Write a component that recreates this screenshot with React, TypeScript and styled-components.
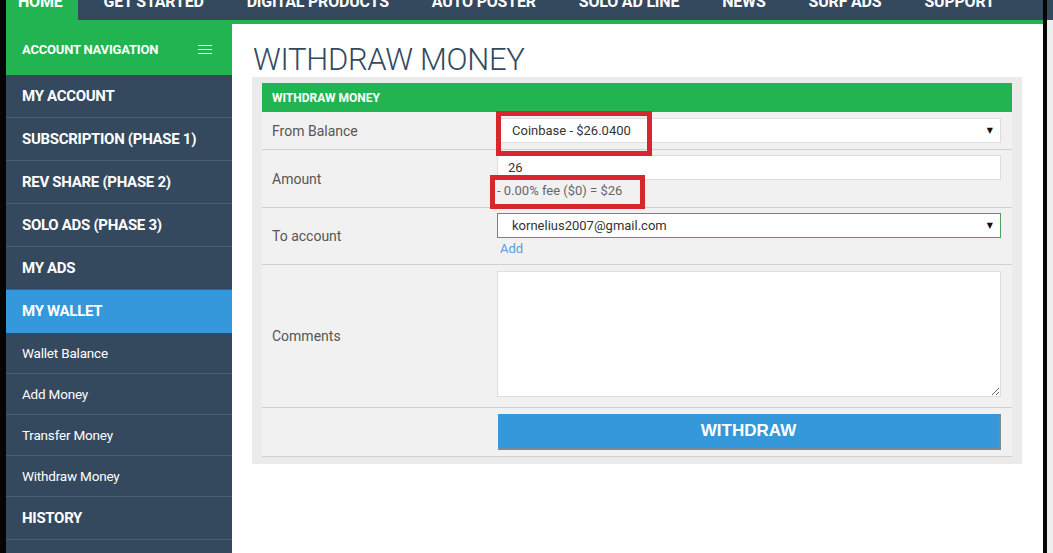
import React from "react";
import styled, { createGlobalStyle } from "styled-components";

const GlobalStyle = createGlobalStyle`
  html, body { margin: 0; padding: 0; }
  body {
    width: 1053px;
    height: 553px;
    overflow: hidden;
    font-family: Roboto, "Noto Sans", Arial, sans-serif;
    background: #ffffff;
  }
  * { box-sizing: border-box; }
`;

const NAVY = "#34495e";
const GREEN = "#21b451";
const BLUE = "#3498db";

const Frame = styled.div`
  display: flex;
  width: 1053px;
  height: 553px;
  overflow: hidden;
`;

const Edge = styled.div<{ $w: number }>`
  width: ${(p) => p.$w}px;
  flex: none;
  background: #050505;
`;

const Gutter = styled.div`
  width: 6px;
  flex: none;
  background: linear-gradient(to bottom, ${NAVY} 0, ${NAVY} 20px, #eceeef 20px);
`;

const Center = styled.div`
  width: 1037px;
  flex: none;
  display: flex;
  flex-direction: column;
  min-height: 0;
`;

const TopNav = styled.nav`
  flex: none;
  display: flex;
  height: 20px;
  background: ${NAVY};
  overflow: hidden;
  gap: 9px;
`;

const TopItem = styled.a<{ $active?: boolean }>`
  display: flex;
  align-items: flex-end;
  padding: ${(p) => (p.$active ? "0 15px 10px 12px" : "0 17px 10px")};
  background: ${(p) => (p.$active ? GREEN : "transparent")};
  color: #fff;
  font-weight: 700;
  font-size: 16px;
  line-height: 16px;
  letter-spacing: -0.2px;
  text-transform: uppercase;
  white-space: nowrap;
`;

const GreenLine = styled.div`
  flex: none;
  height: 4px;
  background: ${GREEN};
`;

const Body = styled.div`
  flex: 1;
  min-height: 0;
  overflow: hidden;
  display: flex;
`;

const Sidebar = styled.aside`
  width: 226px;
  flex: none;
  background: ${NAVY};
  display: flex;
  flex-direction: column;
`;

const SideHeader = styled.div`
  flex: none;
  height: 51px;
  background: ${GREEN};
  display: flex;
  align-items: center;
  justify-content: space-between;
  padding: 0 20px 0 16px;
  color: #fff;
  font-weight: 700;
  font-size: 13px;
  letter-spacing: -0.2px;
  text-transform: uppercase;
`;

const Burger = styled.span`
  display: flex;
  flex-direction: column;
  gap: 3px;
  width: 14px;
  & > i {
    display: block;
    height: 1px;
    background: #eaf7ee;
  }
`;

const SideItem = styled.a<{ $kind: "main" | "sub" | "active" }>`
  flex: none;
  display: flex;
  align-items: center;
  height: ${(p) => (p.$kind === "sub" ? 41 : 43)}px;
  padding-left: 16px;
  border-bottom: 1px solid ${(p) => (p.$kind === "active" ? BLUE : "#4b5e72")};
  background: ${(p) => (p.$kind === "active" ? BLUE : NAVY)};
  color: #fff;
  font-weight: ${(p) => (p.$kind === "sub" ? 400 : 700)};
  font-size: ${(p) => (p.$kind === "sub" ? "13.5px" : "15px")};
  letter-spacing: ${(p) => (p.$kind === "sub" ? "-0.2px" : "-0.3px")};
  text-transform: ${(p) => (p.$kind === "sub" ? "none" : "uppercase")};
  white-space: nowrap;
`;

const Main = styled.main`
  width: 811px;
  flex: none;
  background: #fff;
  padding: 19px 21px 0 20px;
`;

const Title = styled.h1`
  margin: 0 0 0 1px;
  font-weight: 300;
  font-size: 31px;
  line-height: 34px;
  color: ${NAVY};
  letter-spacing: -0.3px;
`;

const Panel = styled.section`
  position: relative;
  background: #ebebeb;
  padding: 6px 10px 7px;
`;

const PanelHeader = styled.div`
  height: 29px;
  background: ${GREEN};
  color: #fff;
  font-weight: 700;
  font-size: 12px;
  display: flex;
  align-items: center;
  padding-left: 10px;
  text-transform: uppercase;
`;

const Row = styled.div<{ $pt: number; $pb: number }>`
  display: grid;
  grid-template-columns: 235px 1fr;
  background: #f1f1f1;
  border-bottom: 1px solid #d0d0d0;
  & > div:last-child {
    padding: ${(p) => p.$pt}px 11px ${(p) => p.$pb}px 0;
  }
`;

const Label = styled.div`
  display: flex;
  align-items: center;
  padding-left: 10px;
  color: #555;
  font-size: 14px;
`;

const Control = styled.div`
  display: flex;
  flex-direction: column;
`;

const SelectBox = styled.div<{ $focus?: boolean }>`
  height: 25px;
  display: flex;
  align-items: center;
  justify-content: space-between;
  padding: 0 7px 0 14px;
  background: #fff;
  border: 1px solid ${(p) => (p.$focus ? "#4aa35a" : "#dedede")};
  color: #333;
  font-size: 13px;
`;

const Arrow = styled.span`
  font-size: 8px;
  color: #111;
  font-family: "DejaVu Sans", sans-serif;
`;

const TextInput = styled.input`
  height: 25px;
  border: 1px solid #dedede;
  background: #fff;
  padding: 0 10px;
  font-family: Roboto, sans-serif;
  font-size: 13px;
  color: #333;
  outline: none;
`;

const Note = styled.div`
  line-height: 22px;
  font-size: 13px;
  color: #666;
`;

const AddLink = styled.a`
  line-height: 22px;
  font-size: 13px;
  color: #5a9bd8;
  padding-left: 3px;
`;

const TextArea = styled.textarea`
  display: block;
  width: 100%;
  height: 126px;
  border: 1px solid #dedede;
  background: #fff;
  resize: vertical;
  outline: none;
`;

const Button = styled.button`
  height: 36px;
  margin-left: 1px;
  border: none;
  border-right: 2px solid #7d8a96;
  border-bottom: 2px solid #7d8a96;
  background: ${BLUE};
  color: #fff;
  font-family: "Liberation Sans", Arial, sans-serif;
  font-weight: 700;
  font-size: 17px;
`;

const Mark = styled.div`
  position: absolute;
  border: 5px solid #d8262e;
  pointer-events: none;
`;

const topLinks = [
  "Home",
  "Get Started",
  "Digital Products",
  "Auto Poster",
  "Solo Ad Line",
  "News",
  "Surf Ads",
  "Support",
];

const sideLinks: { label: string; kind: "main" | "sub" | "active" }[] = [
  { label: "My Account", kind: "main" },
  { label: "Subscription (Phase 1)", kind: "main" },
  { label: "Rev Share (Phase 2)", kind: "main" },
  { label: "Solo Ads (Phase 3)", kind: "main" },
  { label: "My Ads", kind: "main" },
  { label: "My Wallet", kind: "active" },
  { label: "Wallet Balance", kind: "sub" },
  { label: "Add Money", kind: "sub" },
  { label: "Transfer Money", kind: "sub" },
  { label: "Withdraw Money", kind: "sub" },
  { label: "History", kind: "main" },
  { label: "Settings", kind: "main" },
];

export default function App() {
  return (
    <>
      <GlobalStyle />
      <Frame>
        <Edge $w={6} />
        <Center>
          <TopNav>
            {topLinks.map((t, i) => (
              <TopItem key={t} $active={i === 0}>
                {t}
              </TopItem>
            ))}
          </TopNav>
          <GreenLine />
          <Body>
            <Sidebar>
              <SideHeader>
                <span>Account Navigation</span>
                <Burger>
                  <i />
                  <i />
                  <i />
                </Burger>
              </SideHeader>
              {sideLinks.map((s) => (
                <SideItem key={s.label} $kind={s.kind}>
                  {s.label}
                </SideItem>
              ))}
            </Sidebar>
            <Main>
              <Title>WITHDRAW MONEY</Title>
              <Panel>
                <PanelHeader>Withdraw Money</PanelHeader>
                <Row $pt={6} $pb={6}>
                  <Label>From Balance</Label>
                  <Control>
                    <SelectBox>
                      <span>Coinbase - $26.0400</span>
                      <Arrow>▼</Arrow>
                    </SelectBox>
                  </Control>
                </Row>
                <Row $pt={5} $pb={5}>
                  <Label>Amount</Label>
                  <Control>
                    <TextInput value="26" readOnly />
                    <Note>- 0.00% fee ($0) = $26</Note>
                  </Control>
                </Row>
                <Row $pt={5} $pb={4}>
                  <Label>To account</Label>
                  <Control>
                    <SelectBox $focus>
                      <span>kornelius2007@gmail.com</span>
                      <Arrow>▼</Arrow>
                    </SelectBox>
                    <AddLink>Add</AddLink>
                  </Control>
                </Row>
                <Row $pt={6} $pb={10}>
                  <Label>Comments</Label>
                  <Control>
                    <TextArea />
                  </Control>
                </Row>
                <Row $pt={6} $pb={6}>
                  <Label />
                  <Control>
                    <Button>WITHDRAW</Button>
                  </Control>
                </Row>
                <Mark style={{ left: 244, top: 34, width: 156, height: 45 }} />
                <Mark style={{ left: 238, top: 98, width: 155, height: 34 }} />
              </Panel>
            </Main>
          </Body>
        </Center>
        <Edge $w={4} />
        <Gutter />
      </Frame>
    </>
  );
}
